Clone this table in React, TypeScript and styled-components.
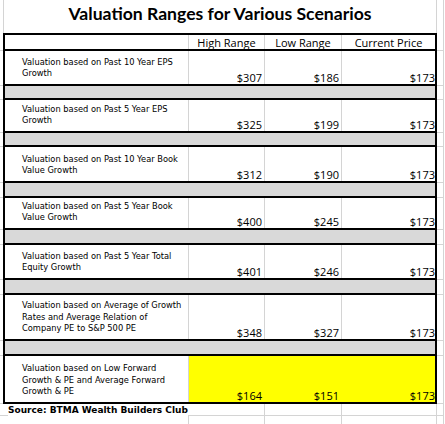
import React from 'react';
import styled, { createGlobalStyle } from 'styled-components';

const GRID = '#d4d4d4';
const BAND = '#d9d9d9';
const HILITE = '#ffff00';

const Global = createGlobalStyle`
  html, body { margin: 0; padding: 0; background: #fff; }
  body { width: 445px; height: 424px; overflow: hidden; }
`;

const Sheet = styled.div`
  width: 445px;
  display: flex;
  flex-direction: column;
`;

const Line = styled.div<{ $h: number }>`
  display: flex;
  height: ${p => p.$h}px;
  flex: none;
`;

const LeftGutter = styled.div<{ $tick?: boolean }>`
  width: 3px;
  flex: none;
  box-sizing: border-box;
  border-bottom: ${p => (p.$tick ? `1px solid ${GRID}` : 'none')};
`;

const RightGutter = styled.div<{ $tick?: boolean }>`
  width: 7px;
  margin-right: 1px;
  flex: none;
  box-sizing: border-box;
  border-right: 1px solid ${GRID};
  border-bottom: ${p => (p.$tick ? `1px solid ${GRID}` : 'none')};
`;

const TitleCell = styled.div`
  width: 434px;
  flex: none;
  box-sizing: border-box;
  border-left: 1px solid ${GRID};
  border-right: 1px solid ${GRID};
  padding-top: 3px;
  text-align: center;
  font-family: Lato, 'Open Sans', sans-serif;
  font-weight: 700;
  font-size: 17.6px;
  line-height: 21px;
  color: #000;
`;

const RowBody = styled.div<{ $top?: boolean }>`
  width: 434px;
  flex: none;
  box-sizing: border-box;
  display: flex;
  border-left: 2px solid #000;
  border-right: 2px solid #000;
  border-bottom: 2px solid #000;
  border-top: ${p => (p.$top ? '2px solid #000' : 'none')};
`;

const Band = styled.div`
  flex: 1;
  background: ${BAND};
`;

const LabelCell = styled.div`
  width: 184px;
  flex: none;
  box-sizing: border-box;
  border-right: 1px solid ${GRID};
  padding: 0 0 4px 17px;
  display: flex;
  flex-direction: column;
  justify-content: flex-end;
  font-family: 'DejaVu Sans', Verdana, sans-serif;
  font-size: 8.3px;
  line-height: 11.7px;
  color: #000;
  white-space: nowrap;
`;

const HeadCell = styled.div<{ $w: number; $last?: boolean }>`
  width: ${p => p.$w}px;
  flex: none;
  box-sizing: border-box;
  border-right: ${p => (p.$last ? 'none' : `1px solid ${GRID}`)};
  display: flex;
  align-items: flex-end;
  justify-content: center;
  font-family: 'Open Sans', sans-serif;
  font-size: 11px;
  line-height: 13px;
  color: #000;
  white-space: nowrap;
`;

const ValueCell = styled.div<{ $w: number; $last?: boolean; $fill?: string; $pr: number }>`
  width: ${p => p.$w}px;
  flex: none;
  box-sizing: border-box;
  background: ${p => p.$fill ?? 'transparent'};
  border-right: ${p => (p.$last ? 'none' : `1px solid ${p.$fill ?? GRID}`)};
  padding-right: ${p => p.$pr}px;
  display: flex;
  align-items: flex-end;
  justify-content: flex-end;
  font-family: 'Open Sans', sans-serif;
  font-size: 11px;
  line-height: 12px;
  color: #000;
  white-space: nowrap;
`;

const PlainCell = styled.div<{ $w: number; $line?: boolean }>`
  width: ${p => p.$w}px;
  flex: none;
  box-sizing: border-box;
  border-right: ${p => (p.$line ? `1px solid ${GRID}` : 'none')};
`;

const SourceRow = styled.div`
  flex: 1;
  display: flex;
  position: relative;
  border-bottom: 1px solid ${GRID};
`;

const SourceText = styled.div`
  position: absolute;
  left: 5px;
  top: 1px;
  background: #fff;
  font-family: 'DejaVu Sans', Verdana, sans-serif;
  font-weight: 700;
  font-size: 9px;
  line-height: 11px;
  color: #000;
  white-space: nowrap;
`;

const COLS = [
  { w: 76, pr: 2 },
  { w: 77, pr: 2 },
  { w: 93, pr: 0 },
];

type Row = { label: string[]; values: string[]; h: number; band: number; hilite?: boolean };

const rows: Row[] = [
  { label: ['Valuation based on Past 10 Year EPS', 'Growth'], values: ['$307', '$186', '$173'], h: 35, band: 14 },
  { label: ['Valuation based on Past 5 Year EPS', 'Growth'], values: ['$325', '$199', '$173'], h: 33, band: 14 },
  { label: ['Valuation based on Past 10 Year Book', 'Value Growth'], values: ['$312', '$190', '$173'], h: 36, band: 15 },
  { label: ['Valuation based on Past 5 Year Book', 'Value Growth'], values: ['$400', '$245', '$173'], h: 32, band: 15 },
  { label: ['Valuation based on Past 5 Year Total', 'Equity Growth'], values: ['$401', '$246', '$173'], h: 35, band: 15 },
  {
    label: ['Valuation based on Average of Growth', 'Rates and Average Relation of', 'Company PE to S&P 500 PE'],
    values: ['$348', '$327', '$173'],
    h: 46,
    band: 15,
  },
  {
    label: ['Valuation based on Low Forward', 'Growth & PE and Average Forward', 'Growth & PE'],
    values: ['$164', '$151', '$173'],
    h: 48,
    band: 0,
    hilite: true,
  },
];

export default function App() {
  return (
    <>
      <Global />
      <Sheet>
        <Line $h={33}>
          <LeftGutter />
          <TitleCell>Valuation Ranges for Various Scenarios</TitleCell>
          <RightGutter />
        </Line>

        <Line $h={18}>
          <LeftGutter $tick />
          <RowBody $top>
            <PlainCell $w={184} $line />
            <HeadCell $w={76}>High Range</HeadCell>
            <HeadCell $w={77}>Low Range</HeadCell>
            <HeadCell $w={93} $last>Current Price</HeadCell>
          </RowBody>
          <RightGutter $tick />
        </Line>

        {rows.map((r, i) => (
          <React.Fragment key={i}>
            <Line $h={r.h}>
              <LeftGutter $tick />
              <RowBody>
                <LabelCell>
                  {r.label.map((l, j) => (
                    <span key={j}>{l}</span>
                  ))}
                </LabelCell>
                {r.values.map((v, j) => (
                  <ValueCell
                    key={j}
                    $w={COLS[j].w}
                    $pr={COLS[j].pr}
                    $last={j === 2}
                    $fill={r.hilite ? HILITE : undefined}
                  >
                    {v}
                  </ValueCell>
                ))}
              </RowBody>
              <RightGutter $tick />
            </Line>
            {r.band > 0 && (
              <Line $h={r.band}>
                <LeftGutter $tick />
                <RowBody>
                  <Band />
                </RowBody>
                <RightGutter $tick />
              </Line>
            )}
          </React.Fragment>
        ))}

        <Line $h={12}>
          <LeftGutter $tick />
          <SourceRow>
            <PlainCell $w={186} />
            <PlainCell $w={76} $line />
            <PlainCell $w={77} $line />
            <PlainCell $w={95} $line />
            <SourceText>Source: BTMA Wealth Builders Club</SourceText>
          </SourceRow>
          <RightGutter $tick />
        </Line>

        <Line $h={20}>
          <LeftGutter $tick />
          <SourceRow>
            <PlainCell $w={186} $line />
            <PlainCell $w={76} $line />
            <PlainCell $w={77} $line />
            <PlainCell $w={95} $line />
          </SourceRow>
          <RightGutter $tick />
        </Line>
      </Sheet>
    </>
  );
}
